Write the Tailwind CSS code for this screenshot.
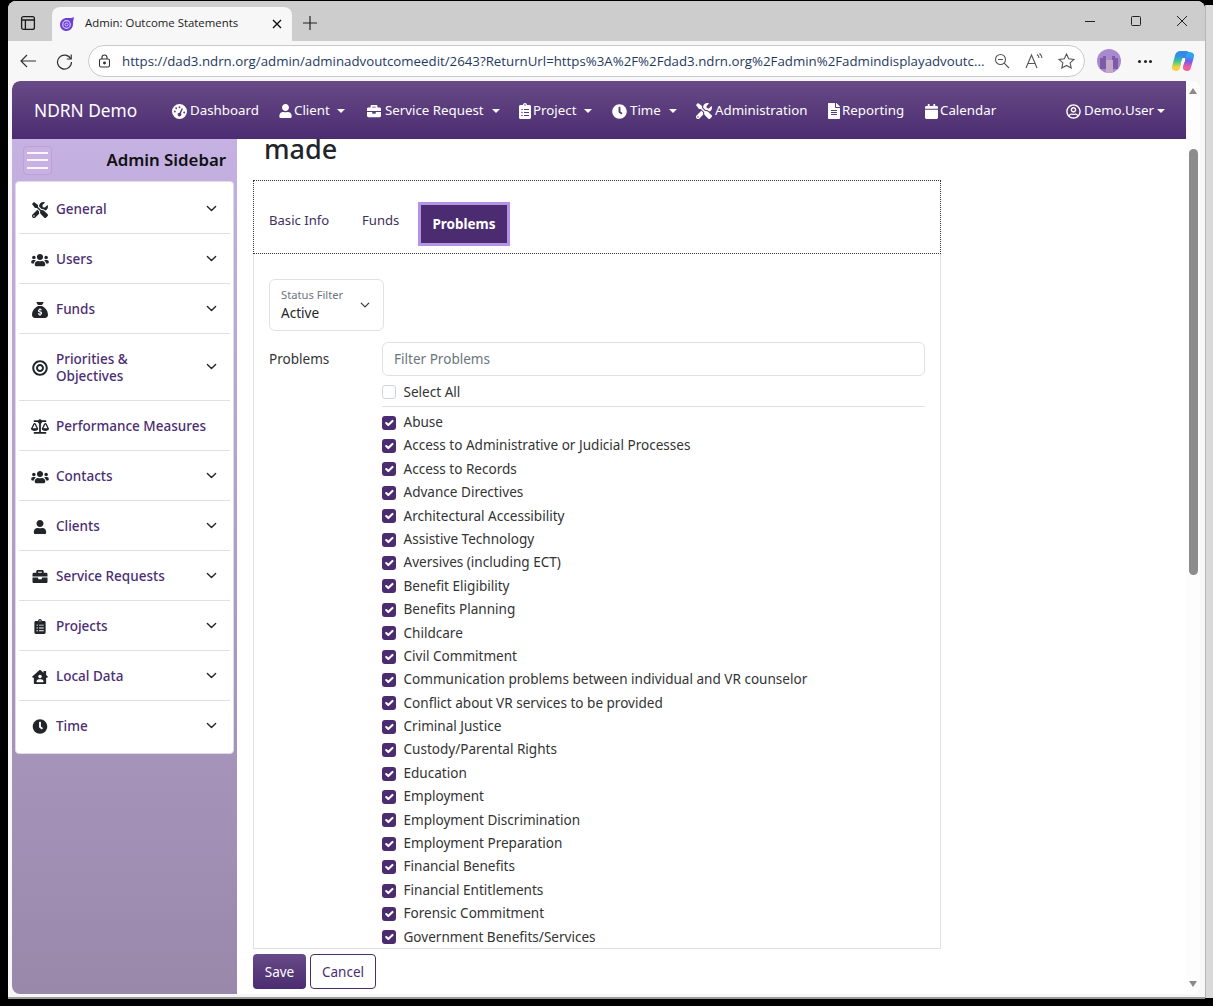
<!DOCTYPE html>
<html lang="en">
<head>
<meta charset="utf-8">
<title>Admin: Outcome Statements</title>
<script src="https://cdn.jsdelivr.net/npm/@tailwindcss/browser@4"></script>
</head>
<body class="m-0 bg-black overflow-hidden">
<svg class="hidden" xmlns="http://www.w3.org/2000/svg">
<symbol id="i-tools" viewBox="0 0 512 512"><path d="M501.1 395.7L384 278.6c-23.1-23.1-57.6-27.6-85.4-13.9L192 158.1V96L64 0 0 64l96 128h62.1l106.6 106.6c-13.6 27.8-9.2 62.3 13.9 85.4l117.1 117.1c14.6 14.6 38.2 14.6 52.7 0l52.7-52.7c14.5-14.6 14.5-38.2 0-52.7zM331.7 225c28.3 0 54.9 11 74.9 31l19.4 19.4c15.8-6.9 30.8-16.5 43.8-29.5 37.1-37.1 49.7-89.3 37.9-136.7-2.2-9-13.5-12.1-20.1-5.5l-74.4 74.4-67.9-11.3L334 98.9l74.4-74.4c6.6-6.6 3.4-17.9-5.7-20.2-47.4-11.7-99.6.9-136.6 37.9-28.5 28.5-41.9 66.1-41.2 103.6l82.1 82.1c8.1-1.9 16.5-2.9 24.7-2.9zm-103.9 82l-56.7-56.7L18.7 402.8c-25 25-25 65.5 0 90.5s65.5 25 90.5 0l123.6-123.6c-7.6-19.9-9.9-41.6-5-62.7zM64 472c-13.2 0-24-10.8-24-24 0-13.3 10.7-24 24-24s24 10.7 24 24c0 13.2-10.7 24-24 24z"/></symbol>
<symbol id="i-users" viewBox="0 0 640 512"><path d="M96 224c35.3 0 64-28.7 64-64s-28.7-64-64-64-64 28.7-64 64 28.7 64 64 64zm448 0c35.3 0 64-28.7 64-64s-28.7-64-64-64-64 28.7-64 64 28.7 64 64 64zm32 32h-64c-17.6 0-33.5 7.1-45.1 18.6 40.3 22.1 68.9 62 75.1 109.4h66c17.7 0 32-14.3 32-32v-32c0-35.3-28.7-64-64-64zm-256 0c61.9 0 112-50.1 112-112S381.9 32 320 32 208 82.1 208 144s50.1 112 112 112zm76.8 32h-8.3c-20.8 10-43.9 16-68.5 16s-47.6-6-68.5-16h-8.3C179.6 288 128 339.6 128 403.2V432c0 26.5 21.5 48 48 48h288c26.5 0 48-21.5 48-48v-28.8c0-63.6-51.6-115.2-115.2-115.2zm-223.7-13.4C161.5 263.1 145.6 256 128 256H64c-35.3 0-64 28.7-64 64v32c0 17.7 14.3 32 32 32h65.9c6.3-47.4 34.9-87.3 75.2-109.4z"/></symbol>
<symbol id="i-sack" viewBox="0 0 512 512"><path d="M320 96H192L144.6 24.9C137.5 14.2 145.1 0 157.9 0H354.1c12.8 0 20.4 14.2 13.3 24.9L320 96zM192 128H320c3.8 2.5 8.1 5.3 13 8.4C389.7 172.7 512 250.9 512 416c0 53-43 96-96 96H96c-53 0-96-43-96-96C0 250.9 122.3 172.7 179 136.4c4.8-3.1 9.2-5.9 13-8.4zm84 88c0-11-9-20-20-20s-20 9-20 20v14c-7.6 1.7-15.2 4.4-22.2 8.5c-13.9 8.3-25.9 22.8-25.8 43.9c.1 20.3 12 33.1 24.7 40.7c11 6.6 24.7 10.8 35.6 14l1.7 .5c12.6 3.8 21.8 6.8 28 10.7c5.1 3.2 5.8 5.4 5.9 8.2c.1 5-1.8 8-5.9 10.5c-5 3.1-12.9 5-21.4 4.7c-11.1-.4-21.5-3.9-35.1-8.5c-2.3-.8-4.7-1.6-7.2-2.4c-10.5-3.5-21.8 2.2-25.3 12.6s2.2 21.8 12.6 25.3c1.9 .6 4 1.3 6.1 2.1c8.3 2.9 17.9 6.2 28.2 8.4V424c0 11 9 20 20 20s20-9 20-20V410.2c8-1.7 16-4.5 23.2-9c14.3-8.9 25.1-24.1 24.8-45c-.3-20.3-11.7-33.4-24.6-41.6c-11.5-7.2-25.9-11.6-37.1-15l-.7-.2c-12.8-3.9-21.9-6.7-28.3-10.5c-5.2-3.1-5.3-4.9-5.3-6.7c0-3.7 1.4-6.5 6.2-9.3c5.4-3.2 13.6-5.1 21.5-5c9.6 .1 20.2 2.2 31.2 5.2c10.7 2.8 21.6-3.5 24.5-14.2s-3.5-21.6-14.2-24.5c-6.5-1.7-13.7-3.4-21.1-4.7V216z"/></symbol>
<symbol id="i-bullseye" viewBox="0 0 496 512"><path d="M248 8C111.03 8 0 119.03 0 256s111.03 248 248 248 248-111.03 248-248S384.97 8 248 8zm0 432c-101.69 0-184-82.29-184-184 0-101.69 82.29-184 184-184 101.69 0 184 82.29 184 184 0 101.69-82.29 184-184 184zm0-312c-70.69 0-128 57.31-128 128s57.31 128 128 128 128-57.31 128-128-57.31-128-128-128zm0 192c-35.29 0-64-28.71-64-64s28.71-64 64-64 64 28.71 64 64-28.71 64-64 64z"/></symbol>
<symbol id="i-scale" viewBox="0 0 640 512"><path d="M256 336h-.02c0-16.18 1.34-8.73-85.05-181.51-17.65-35.29-68.19-35.36-85.87 0C-2.06 328.75.02 320.33.02 336H0c0 44.18 57.31 80 128 80s128-35.82 128-80zM128 176l72 144H56l72-144zm511.98 160c0-16.18 1.34-8.73-85.05-181.51-17.65-35.29-68.19-35.36-85.87 0-87.12 174.26-85.04 165.84-85.04 181.51H384c0 44.18 57.31 80 128 80s128-35.82 128-80h-.02zM440 320l72-144 72 144H440zm88 128H352V153.25c23.51-10.29 41.16-31.48 46.39-57.25H528c8.84 0 16-7.16 16-16V48c0-8.84-7.16-16-16-16H383.64C369.04 12.68 346.09 0 320 0s-49.04 12.68-63.64 32H112c-8.84 0-16 7.16-16 16v32c0 8.84 7.16 16 16 16h129.61c5.23 25.76 22.87 46.96 46.39 57.25V448H112c-8.84 0-16 7.16-16 16v32c0 8.84 7.16 16 16 16h416c8.84 0 16-7.16 16-16v-32c0-8.84-7.16-16-16-16z"/></symbol>
<symbol id="i-user" viewBox="0 0 448 512"><path d="M224 256c70.7 0 128-57.3 128-128S294.7 0 224 0 96 57.3 96 128s57.3 128 128 128zm89.6 32h-16.7c-22.2 10.2-46.9 16-72.9 16s-50.6-5.8-72.9-16h-16.7C60.2 288 0 348.2 0 422.4V464c0 26.5 21.5 48 48 48h352c26.5 0 48-21.5 48-48v-41.6c0-74.2-60.2-134.4-134.4-134.4z"/></symbol>
<symbol id="i-brief" viewBox="0 0 512 512"><path d="M320 336c0 8.84-7.16 16-16 16h-96c-8.84 0-16-7.16-16-16v-48H0v144c0 25.6 22.4 48 48 48h416c25.6 0 48-22.4 48-48V288H320v48zm144-208h-80V80c0-25.6-22.4-48-48-48H176c-25.6 0-48 22.4-48 48v48H48c-25.6 0-48 22.4-48 48v80h512v-80c0-25.6-22.4-48-48-48zm-144 0H192V96h128v32z"/></symbol>
<symbol id="i-clip" viewBox="0 0 384 512"><path d="M336 64h-80c0-35.3-28.7-64-64-64s-64 28.7-64 64H48C21.5 64 0 85.5 0 112v352c0 26.5 21.5 48 48 48h288c26.5 0 48-21.5 48-48V112c0-26.5-21.5-48-48-48zM96 424c-13.3 0-24-10.7-24-24s10.7-24 24-24 24 10.7 24 24-10.7 24-24 24zm0-96c-13.3 0-24-10.7-24-24s10.7-24 24-24 24 10.7 24 24-10.7 24-24 24zm0-96c-13.3 0-24-10.7-24-24s10.7-24 24-24 24 10.7 24 24-10.7 24-24 24zm96-192c13.3 0 24 10.7 24 24s-10.7 24-24 24-24-10.7-24-24 10.7-24 24-24zm128 368c0 4.4-3.6 8-8 8H168c-4.4 0-8-3.6-8-8v-16c0-4.4 3.6-8 8-8h144c4.4 0 8 3.6 8 8v16zm0-96c0 4.4-3.6 8-8 8H168c-4.4 0-8-3.6-8-8v-16c0-4.4 3.6-8 8-8h144c4.4 0 8 3.6 8 8v16zm0-96c0 4.4-3.6 8-8 8H168c-4.4 0-8-3.6-8-8v-16c0-4.4 3.6-8 8-8h144c4.4 0 8 3.6 8 8v16z"/></symbol>
<symbol id="i-house" viewBox="0 0 576 512"><path d="M570.69,236.27,512,184.44V48a16,16,0,0,0-16-16H432a16,16,0,0,0-16,16V99.67L314.78,10.3C308.5,4.61,296.53,0,288,0s-20.46,4.61-26.74,10.3l-256,226A18.27,18.27,0,0,0,0,248.2a18.64,18.64,0,0,0,4.09,10.71L25.5,282.7a21.14,21.14,0,0,0,12,5.3,21.67,21.67,0,0,0,10.69-4.11l15.9-14V480a32,32,0,0,0,32,32H480a32,32,0,0,0,32-32V269.88l15.91,14A21.94,21.94,0,0,0,538.63,288a20.89,20.89,0,0,0,11.87-5.31l21.41-23.81A21.64,21.64,0,0,0,576,248.19,21,21,0,0,0,570.69,236.27ZM288,176a64,64,0,1,1-64,64A64,64,0,0,1,288,176ZM400,448H176a16,16,0,0,1-16-16,96,96,0,0,1,96-96h64a96,96,0,0,1,96,96A16,16,0,0,1,400,448Z"/></symbol>
<symbol id="i-clock" viewBox="0 0 512 512"><path d="M256,8C119,8,8,119,8,256S119,504,256,504,504,393,504,256,393,8,256,8Zm92.49,313h0l-20,25a16,16,0,0,1-22.49,2.5h0l-67-49.72a40,40,0,0,1-15-31.23V112a16,16,0,0,1,16-16h32a16,16,0,0,1,16,16V256l58,42.5A16,16,0,0,1,348.49,321Z"/></symbol>
<symbol id="i-gauge" viewBox="0 0 512 512"><path d="M0 256a256 256 0 1 1 512 0A256 256 0 1 1 0 256zm320 96c0-15-5-28-14-39l59-137c5-12-1-26-13-31s-26 1-31 13l-59 137c-2 0-4 0-6 0c-35 0-64 29-64 64s29 64 64 64s64-29 64-64zM256 144a32 32 0 1 0 0-64 32 32 0 1 0 0 64zM144 176a32 32 0 1 0 0-64 32 32 0 1 0 0 64zm-16 80a32 32 0 1 0-64 0 32 32 0 1 0 64 0zm320 32a32 32 0 1 0-64 0 32 32 0 1 0 64 0z"/></symbol>
<symbol id="i-file" viewBox="0 0 384 512"><path d="M224 136V0H24C10.7 0 0 10.7 0 24v464c0 13.3 10.7 24 24 24h336c13.3 0 24-10.7 24-24V160H248c-13.2 0-24-10.8-24-24zm64 236c0 6.6-5.4 12-12 12H108c-6.6 0-12-5.4-12-12v-8c0-6.6 5.4-12 12-12h168c6.6 0 12 5.4 12 12v8zm0-64c0 6.6-5.4 12-12 12H108c-6.6 0-12-5.4-12-12v-8c0-6.6 5.4-12 12-12h168c6.6 0 12 5.4 12 12v8zm0-72v8c0 6.6-5.4 12-12 12H108c-6.6 0-12-5.4-12-12v-8c0-6.6 5.4-12 12-12h168c6.6 0 12 5.4 12 12zm96-114.1v6.1H256V0h6.1c6.4 0 12.5 2.5 17 7l97.9 98c4.5 4.5 7 10.6 7 16.9z"/></symbol>
<symbol id="i-cal" viewBox="0 0 448 512"><path d="M12 192h424c6.6 0 12 5.4 12 12v260c0 26.5-21.5 48-48 48H48c-26.5 0-48-21.5-48-48V204c0-6.6 5.4-12 12-12zm436-44v-36c0-26.5-21.5-48-48-48h-48V12c0-6.6-5.4-12-12-12h-40c-6.6 0-12 5.4-12 12v52H160V12c0-6.6-5.4-12-12-12h-40c-6.6 0-12 5.4-12 12v52H48C21.5 64 0 85.5 0 112v36c0 6.6 5.4 12 12 12h424c6.6 0 12-5.4 12-12z"/></symbol>
<symbol id="i-ucircle" viewBox="0 0 496 512"><path d="M248 104c-53 0-96 43-96 96s43 96 96 96 96-43 96-96-43-96-96-96zm0 144c-26.5 0-48-21.5-48-48s21.5-48 48-48 48 21.5 48 48-21.5 48-48 48zm0-240C111 8 0 119 0 256s111 248 248 248 248-111 248-248S385 8 248 8zm0 448c-49.7 0-95.1-18.3-130.1-48.4 14.9-23 40.4-38.6 69.6-39.5 20.8 6.4 40.6 9.6 60.5 9.6s39.7-3.1 60.5-9.6c29.2 1 54.7 16.5 69.6 39.5-35 30.1-80.4 48.4-130.1 48.4zm162.7-84.1c-24.4-31.4-62.1-51.9-105.1-51.9-10.2 0-26 9.6-57.6 9.6-31.5 0-47.4-9.6-57.6-9.6-42.9 0-80.6 20.5-105.1 51.9C61.9 339.2 48 299.2 48 256c0-110.3 89.7-200 200-200s200 89.7 200 200c0 43.2-13.9 83.2-37.3 115.9z"/></symbol>
<symbol id="i-chev" viewBox="0 0 16 16"><path fill="none" stroke="currentColor" stroke-width="2" stroke-linecap="round" stroke-linejoin="round" d="M2 5l6 6 6-6"/></symbol>
<symbol id="i-check" viewBox="0 0 20 20"><path fill="none" stroke="#fff" stroke-width="3" stroke-linecap="round" stroke-linejoin="round" d="M6 10l3 3 6-6"/></symbol>
</svg>

<div class="w-[1213px] h-[1006px] flex items-start bg-black font-['Noto_Sans',sans-serif] overflow-hidden">
  <!-- window -->
  <div class="ml-[8px] mt-px w-[1197px] h-[998px] flex flex-col rounded-t-lg overflow-hidden bg-[#f7f7f7] border-b-2 border-b-[#9a9a9a] shrink-0">
    <!-- tab strip -->
    <div class="h-[40px] bg-[#cdcdcd] flex items-end shrink-0 relative">
      <div class="w-[44px] h-[40px] flex items-center justify-center shrink-0 pr-[4px] pt-[4px]">
        <svg width="16" height="16" viewBox="0 0 16 16" fill="none" stroke="#1a1a1a" stroke-width="1.3"><rect x="1.6" y="1.6" width="12.8" height="12.8" rx="2"/><path d="M1.6 5h12.8M5.4 5v9.4" /></svg>
      </div>
      <div class="w-[240px] h-[34px] bg-[#f7f7f7] rounded-t-lg flex items-center pl-[7px] shrink-0">
        <svg width="16" height="16" viewBox="0 0 16 16" class="shrink-0"><path d="M1 8.5C1 4.5 4.5 2 8 2c2.500 0 4.500.5 7-1-.5 3-1 4-1 7 0 4-3 7-6.500 7S1 12.500 1 8.500z" fill="#6b3fd4"/><circle cx="7.500" cy="8.500" r="3.800" fill="none" stroke="#d9c8ff" stroke-width="1.200"/><circle cx="7.500" cy="8.500" r="1.500" fill="none" stroke="#d9c8ff" stroke-width="1"/></svg>
        <span class="ml-[10px] mb-[2px] text-[11.400px] text-[#1a1a1a] whitespace-nowrap flex-1 font-['Open_Sans',sans-serif]">Admin: Outcome Statements</span>
        <svg width="10" height="10" viewBox="0 0 10 10" stroke="#111" stroke-width="1.400" class="mr-[10px] shrink-0"><path d="M1 1l8 8M9 1l-8 8"/></svg>
      </div>
      <div class="w-[36px] h-[40px] flex items-center justify-center shrink-0 pt-[4px]">
        <svg width="14" height="14" viewBox="0 0 14 14" stroke="#222" stroke-width="1.200"><path d="M7 0v14M0 7h14"/></svg>
      </div>
      <div class="flex-1"></div>
      <div class="h-[40px] flex items-center shrink-0">
        <div class="w-[46px] flex justify-center"><svg width="10" height="10" viewBox="0 0 10 10" stroke="#222"><path d="M0 5.500h10"/></svg></div>
        <div class="w-[46px] flex justify-center"><svg width="10" height="10" viewBox="0 0 10 10" fill="none" stroke="#222"><rect x=".5" y=".5" width="9" height="9" rx="1"/></svg></div>
        <div class="w-[46px] flex justify-center"><svg width="10" height="10" viewBox="0 0 10 10" stroke="#222"><path d="M0 0l10 10M10 0L0 10"/></svg></div>
      </div>
    </div>
    <!-- toolbar -->
    <div class="h-[40px] bg-[#f7f7f7] flex items-center shrink-0">
      <div class="w-[40px] flex justify-center"><svg width="16" height="14" viewBox="0 0 16 14" fill="none" stroke="#333" stroke-width="1.200"><path d="M16 7H1M7 1L1 7l6 6"/></svg></div>
      <div class="w-[32px] flex justify-center"><svg width="17" height="17" viewBox="0 0 17 17" fill="none" stroke="#333" stroke-width="1.200"><path d="M14.800 6A7 7 0 1 0 15.500 9"/><path d="M15.200 1.500V6h-4.500"/></svg></div>
      <div class="ml-[8px] w-[997px] h-[32px] rounded-full bg-white border border-[#c9c9c9] flex items-center pl-[9px] pr-[8px] shrink-0">
        <svg width="13" height="14" viewBox="0 0 13 14" fill="none" stroke="#333" stroke-width="1.100" class="shrink-0"><rect x="1.500" y="5" width="10" height="8" rx="1.500"/><path d="M4 5V3.500a2.500 2.500 0 0 1 5 0V5"/><circle cx="6.500" cy="9" r=".9" fill="#333"/></svg>
        <span class="ml-[11px] pt-px text-[13.270px] text-[#1f3a5f] whitespace-nowrap shrink-0 font-['Open_Sans',sans-serif]">https://dad3.ndrn.org/admin/adminadvoutcomeedit/2643?ReturnUrl=https%3A%2F%2Fdad3.ndrn.org%2Fadmin%2Fadmindisplayadvoutc...</span>
        <div class="flex items-center ml-auto gap-[15px] mr-[1px]">
          <svg width="16" height="16" viewBox="0 0 16 16" fill="none" stroke="#555" stroke-width="1.100"><circle cx="6.500" cy="6.500" r="5"/><path d="M10.200 10.200L15 15M4 6.500h5"/></svg>
          <svg width="18" height="16" viewBox="0 0 18 16" fill="none" stroke="#555" stroke-width="1.100"><path d="M1 15L6.500 2 12 15M3 10.500h7M12 1.500c1.500 1 2 2 2 3.500M14.500 .5c1.500 1.300 2.500 3 2.500 4.500"/></svg>
          <svg width="17" height="16" viewBox="0 0 17 16" fill="none" stroke="#555" stroke-width="1.100"><path d="M8.500 1l2.200 4.800 5.300.6-3.900 3.500 1.100 5.100-4.700-2.600L3.800 15l1.100-5.100L1 6.400l5.300-.6z"/></svg>
        </div>
      </div>
      <div class="ml-[12px] w-[24px] h-[24px] rounded-full bg-[#a98ad0] overflow-hidden flex items-end justify-center shrink-0">
        <svg width="24" height="24" viewBox="0 0 24 24"><path d="M3 20V9h3V7h3v4h6V7h3v2h3v11z" fill="#7d5ca6"/><rect x="9" y="11" width="7" height="13" fill="#c3a8c8"/></svg>
      </div>
      <div class="ml-[16px] w-[16px] flex justify-center gap-[2.500px] shrink-0"><span class="w-[3px] h-[3px] rounded-full bg-[#222]"></span><span class="w-[3px] h-[3px] rounded-full bg-[#222]"></span><span class="w-[3px] h-[3px] rounded-full bg-[#222]"></span></div>
      <div class="ml-[18px] shrink-0">
        <svg width="24" height="23" viewBox="0 0 24 23"><defs><linearGradient id="cpa" x1="0" y1="0" x2="0" y2="1"><stop offset="0" stop-color="#2f8fe8"/><stop offset=".5" stop-color="#3ec98c"/><stop offset="1" stop-color="#f4d03f"/></linearGradient><linearGradient id="cpb" x1="0" y1="0" x2="0" y2="1"><stop offset="0" stop-color="#2aa5f0"/><stop offset=".5" stop-color="#7a5ae8"/><stop offset="1" stop-color="#ee5f9a"/></linearGradient><linearGradient id="cpc" x1="0" y1="0" x2="1" y2="0"><stop offset="0" stop-color="#f06a8a"/><stop offset="1" stop-color="#f5733c"/></linearGradient></defs><path d="M9 4.500L15 4.500" stroke="#3a86e0" stroke-width="7" stroke-linecap="round"/><path d="M7 20L15 20" stroke="url(#cpc)" stroke-width="4.500" stroke-linecap="round"/><path d="M8 6L5 17" stroke="url(#cpa)" stroke-width="8" stroke-linecap="round" fill="none"/><path d="M19 6L16 17" stroke="url(#cpb)" stroke-width="8" stroke-linecap="round" fill="none"/><path d="M12.700 10L11.300 13" stroke="#fff" stroke-width="3" stroke-linecap="round"/></svg>
      </div>
    </div>
    <!-- page area -->
    <div class="flex-1 min-h-0 flex ml-[4px] mr-[5px] mb-[3px] bg-white rounded-lg overflow-hidden relative">
      <div class="flex-1 min-w-0 flex flex-col">
        <!-- navbar -->
        <nav class="h-[58px] shrink-0 bg-gradient-to-b from-[#674a86] to-[#4c2c71] flex items-center text-white text-[13.300px] rounded-tl-lg pl-[22px] pt-[2px]">
          <span class="text-[17.300px] w-[138px] shrink-0 whitespace-nowrap">NDRN Demo</span>
          <div class="flex items-center w-[107px] shrink-0"><svg class="w-[15px] h-[15px] fill-white mr-[3px] shrink-0"><use href="#i-gauge"/></svg><span>Dashboard</span></div>
          <div class="flex items-center w-[87px] shrink-0"><svg class="w-[13px] h-[14px] fill-white mr-[2px] shrink-0"><use href="#i-user"/></svg><span>Client</span><span class="ml-[7px] border-x-[4px] border-x-transparent border-t-[4px] border-t-white"></span></div>
          <div class="flex items-center w-[153px] shrink-0"><svg class="w-[16px] h-[14px] fill-white mr-[3px] shrink-0"><use href="#i-brief"/></svg><span>Service Request</span><span class="ml-[8px] border-x-[4px] border-x-transparent border-t-[4px] border-t-white"></span></div>
          <div class="flex items-center w-[93px] shrink-0"><svg class="w-[12px] h-[16px] fill-white mr-[2px] shrink-0"><use href="#i-clip"/></svg><span>Project</span><span class="ml-[8px] border-x-[4px] border-x-transparent border-t-[4px] border-t-white"></span></div>
          <div class="flex items-center w-[84px] shrink-0"><svg class="w-[15px] h-[15px] fill-white mr-[3px] shrink-0"><use href="#i-clock"/></svg><span>Time</span><span class="ml-[8px] border-x-[4px] border-x-transparent border-t-[4px] border-t-white"></span></div>
          <div class="flex items-center w-[132px] shrink-0"><svg class="w-[16px] h-[16px] fill-white mr-[3px] shrink-0"><use href="#i-tools"/></svg><span>Administration</span></div>
          <div class="flex items-center w-[97px] shrink-0"><svg class="w-[12px] h-[16px] fill-white mr-[2px] shrink-0"><use href="#i-file"/></svg><span>Reporting</span></div>
          <div class="flex items-center shrink-0"><svg class="w-[13px] h-[15px] fill-white mr-[2px] shrink-0"><use href="#i-cal"/></svg><span>Calendar</span></div>
          <div class="flex items-center shrink-0 ml-auto mr-[21px]"><svg class="w-[15px] h-[15px] fill-white mr-[3px] shrink-0"><use href="#i-ucircle"/></svg><span>Demo.User</span><span class="ml-[3px] border-x-[4px] border-x-transparent border-t-[4px] border-t-white"></span></div>
        </nav>
        <div class="flex-1 min-h-0 flex">
          <!-- sidebar -->
          <aside class="w-[225px] shrink-0 bg-gradient-to-b from-[#c5b1e2] to-[#9a88ab] flex flex-col">
            <div class="h-[42px] shrink-0 flex items-center justify-between pl-[11px] pr-[11px]">
              <div class="w-[29px] h-[29px] rounded-[4px] bg-[#c9b1e4] border border-[#b9a2d6] flex flex-col justify-center items-center gap-[5.500px]">
                <span class="w-[21px] h-[2px] bg-white/90"></span><span class="w-[21px] h-[2px] bg-white/90"></span><span class="w-[21px] h-[2px] bg-white/90"></span>
              </div>
              <span class="text-[16.800px] font-semibold text-[#111] whitespace-nowrap mb-[1px]">Admin Sidebar</span>
            </div>
            <div class="mx-[3px] w-[219px] h-[573px] bg-white border border-[#dcdce6] rounded-[4px] px-[3px] pt-[2px] text-[#4b2e72] text-[13.500px] font-medium">
              <div class="h-[50px] pt-[2px] flex items-center border-b border-[#dfdfe8] pl-[13px] pr-[13px]"><svg class="w-[16px] h-[16px] fill-[#212529] shrink-0"><use href="#i-tools"/></svg><span class="ml-[8px] flex-1">General</span><svg class="w-[11px] h-[11px] text-[#212529] shrink-0 mt-[-3px]"><use href="#i-chev"/></svg></div>
              <div class="h-[50px] pt-[2px] flex items-center border-b border-[#dfdfe8] pl-[13px] pr-[13px]"><svg class="w-[18px] h-[14px] fill-[#212529] shrink-0 ml-[-1px] mr-[-1px]"><use href="#i-users"/></svg><span class="ml-[8px] flex-1">Users</span><svg class="w-[11px] h-[11px] text-[#212529] shrink-0 mt-[-3px]"><use href="#i-chev"/></svg></div>
              <div class="h-[50px] pt-[2px] flex items-center border-b border-[#dfdfe8] pl-[13px] pr-[13px]"><svg class="w-[16px] h-[16px] fill-[#212529] shrink-0"><use href="#i-sack"/></svg><span class="ml-[8px] flex-1">Funds</span><svg class="w-[11px] h-[11px] text-[#212529] shrink-0 mt-[-3px]"><use href="#i-chev"/></svg></div>
              <div class="h-[67px] pt-[2px] flex items-center border-b border-[#dfdfe8] pl-[13px] pr-[13px]"><svg class="w-[16px] h-[16px] fill-[#212529] shrink-0"><use href="#i-bullseye"/></svg><span class="ml-[8px] flex-1 leading-[17px]">Priorities &amp;<br>Objectives</span><svg class="w-[11px] h-[11px] text-[#212529] shrink-0 mt-[-3px]"><use href="#i-chev"/></svg></div>
              <div class="h-[50px] pt-[2px] flex items-center border-b border-[#dfdfe8] pl-[13px] pr-[13px]"><svg class="w-[18px] h-[15px] fill-[#212529] shrink-0 ml-[-1px] mr-[-1px]"><use href="#i-scale"/></svg><span class="ml-[8px] flex-1 whitespace-nowrap">Performance Measures</span></div>
              <div class="h-[50px] pt-[2px] flex items-center border-b border-[#dfdfe8] pl-[13px] pr-[13px]"><svg class="w-[18px] h-[14px] fill-[#212529] shrink-0 ml-[-1px] mr-[-1px]"><use href="#i-users"/></svg><span class="ml-[8px] flex-1">Contacts</span><svg class="w-[11px] h-[11px] text-[#212529] shrink-0 mt-[-3px]"><use href="#i-chev"/></svg></div>
              <div class="h-[50px] pt-[2px] flex items-center border-b border-[#dfdfe8] pl-[13px] pr-[13px]"><svg class="w-[16px] h-[14px] fill-[#212529] shrink-0"><use href="#i-user"/></svg><span class="ml-[8px] flex-1">Clients</span><svg class="w-[11px] h-[11px] text-[#212529] shrink-0 mt-[-3px]"><use href="#i-chev"/></svg></div>
              <div class="h-[50px] pt-[2px] flex items-center border-b border-[#dfdfe8] pl-[13px] pr-[13px]"><svg class="w-[16px] h-[15px] fill-[#212529] shrink-0"><use href="#i-brief"/></svg><span class="ml-[8px] flex-1">Service Requests</span><svg class="w-[11px] h-[11px] text-[#212529] shrink-0 mt-[-3px]"><use href="#i-chev"/></svg></div>
              <div class="h-[50px] pt-[2px] flex items-center border-b border-[#dfdfe8] pl-[13px] pr-[13px]"><svg class="w-[16px] h-[15px] fill-[#212529] shrink-0"><use href="#i-clip"/></svg><span class="ml-[8px] flex-1">Projects</span><svg class="w-[11px] h-[11px] text-[#212529] shrink-0 mt-[-3px]"><use href="#i-chev"/></svg></div>
              <div class="h-[50px] pt-[2px] flex items-center border-b border-[#dfdfe8] pl-[13px] pr-[13px]"><svg class="w-[16px] h-[14px] fill-[#212529] shrink-0"><use href="#i-house"/></svg><span class="ml-[8px] flex-1">Local Data</span><svg class="w-[11px] h-[11px] text-[#212529] shrink-0 mt-[-3px]"><use href="#i-chev"/></svg></div>
              <div class="h-[50px] pt-px flex items-center pl-[13px] pr-[13px]"><svg class="w-[16px] h-[15px] fill-[#212529] shrink-0"><use href="#i-clock"/></svg><span class="ml-[8px] flex-1">Time</span><svg class="w-[11px] h-[11px] text-[#212529] shrink-0 mt-[-3px]"><use href="#i-chev"/></svg></div>
            </div>
          </aside>
          <!-- main -->
          <main class="flex-1 min-w-0 h-[855px] overflow-hidden pl-[16px] flex flex-col">
            <h1 class="h-[41px] shrink-0 mt-[-7px] pl-[11px] text-[27px] leading-[34px] font-medium text-[#212529] overflow-visible">made</h1>
            <div class="w-[688px] h-[74px] shrink-0 mt-[7px] border border-dotted border-[#333] flex items-start pl-[6px] pt-[21px] text-[13.100px] text-[#3f2f5f]">
              <span class="h-[36px] mt-px flex items-center px-[9px] w-[93px] whitespace-nowrap">Basic Info</span>
              <span class="h-[36px] mt-px flex items-center px-[9px] w-[65px] whitespace-nowrap">Funds</span>
              <span class="h-[44px] w-[92px] flex items-center justify-center bg-[#4b2c71] border-[3px] border-[#b592e6] text-white text-[13.500px] font-bold whitespace-nowrap">Problems</span>
            </div>
            <div class="w-[688px] h-[695px] shrink-0 border-x border-b border-[#dee2e6] overflow-hidden pl-[15px] pr-[15px] pt-[25px] text-[13.550px] text-[#333]">
              <div class="w-[115px] h-[52px] border border-[#dee2e6] rounded-[6px] flex items-center pl-[11px] pr-[13px]">
                <div class="flex-1 flex flex-col"><span class="text-[11.200px] leading-[14px] text-[#6c757d] whitespace-nowrap">Status Filter</span><span class="leading-[20px] text-[#212529] mt-[1px]">Active</span></div>
                <svg class="w-[10px] h-[10px] text-[#343a40] shrink-0"><use href="#i-chev"/></svg>
              </div>
              <div class="flex mt-[11px]">
                <div class="w-[113px] shrink-0 pt-[7px] leading-[20px] text-[#333]">Problems</div>
                <div class="flex-1 min-w-0">
                  <div class="h-[34px] border border-[#dee2e6] rounded-[6px] flex items-center pl-[11px] text-[#6c757d]">Filter Problems</div>
                  <div class="h-[31px] border-b border-[#dee2e6] flex items-center pt-[2px]"><span class="w-[14px] h-[14px] border border-[#ced4da] rounded-[3px] bg-white shrink-0"></span><span class="ml-[7.500px]">Select All</span></div>
                  <div class="pt-[4px] text-[#333] leading-[23.400px]">
                    <div class="h-[23.400px] flex items-center"><svg class="w-[14px] h-[14px] rounded-[3px] bg-[#4b2c71] shrink-0"><use href="#i-check"/></svg><span class="ml-[7.500px]">Abuse</span></div>
                    <div class="h-[23.400px] flex items-center"><svg class="w-[14px] h-[14px] rounded-[3px] bg-[#4b2c71] shrink-0"><use href="#i-check"/></svg><span class="ml-[7.500px]">Access to Administrative or Judicial Processes</span></div>
                    <div class="h-[23.400px] flex items-center"><svg class="w-[14px] h-[14px] rounded-[3px] bg-[#4b2c71] shrink-0"><use href="#i-check"/></svg><span class="ml-[7.500px]">Access to Records</span></div>
                    <div class="h-[23.400px] flex items-center"><svg class="w-[14px] h-[14px] rounded-[3px] bg-[#4b2c71] shrink-0"><use href="#i-check"/></svg><span class="ml-[7.500px]">Advance Directives</span></div>
                    <div class="h-[23.400px] flex items-center"><svg class="w-[14px] h-[14px] rounded-[3px] bg-[#4b2c71] shrink-0"><use href="#i-check"/></svg><span class="ml-[7.500px]">Architectural Accessibility</span></div>
                    <div class="h-[23.400px] flex items-center"><svg class="w-[14px] h-[14px] rounded-[3px] bg-[#4b2c71] shrink-0"><use href="#i-check"/></svg><span class="ml-[7.500px]">Assistive Technology</span></div>
                    <div class="h-[23.400px] flex items-center"><svg class="w-[14px] h-[14px] rounded-[3px] bg-[#4b2c71] shrink-0"><use href="#i-check"/></svg><span class="ml-[7.500px]">Aversives (including ECT)</span></div>
                    <div class="h-[23.400px] flex items-center"><svg class="w-[14px] h-[14px] rounded-[3px] bg-[#4b2c71] shrink-0"><use href="#i-check"/></svg><span class="ml-[7.500px]">Benefit Eligibility</span></div>
                    <div class="h-[23.400px] flex items-center"><svg class="w-[14px] h-[14px] rounded-[3px] bg-[#4b2c71] shrink-0"><use href="#i-check"/></svg><span class="ml-[7.500px]">Benefits Planning</span></div>
                    <div class="h-[23.400px] flex items-center"><svg class="w-[14px] h-[14px] rounded-[3px] bg-[#4b2c71] shrink-0"><use href="#i-check"/></svg><span class="ml-[7.500px]">Childcare</span></div>
                    <div class="h-[23.400px] flex items-center"><svg class="w-[14px] h-[14px] rounded-[3px] bg-[#4b2c71] shrink-0"><use href="#i-check"/></svg><span class="ml-[7.500px]">Civil Commitment</span></div>
                    <div class="h-[23.400px] flex items-center"><svg class="w-[14px] h-[14px] rounded-[3px] bg-[#4b2c71] shrink-0"><use href="#i-check"/></svg><span class="ml-[7.500px]">Communication problems between individual and VR counselor</span></div>
                    <div class="h-[23.400px] flex items-center"><svg class="w-[14px] h-[14px] rounded-[3px] bg-[#4b2c71] shrink-0"><use href="#i-check"/></svg><span class="ml-[7.500px]">Conflict about VR services to be provided</span></div>
                    <div class="h-[23.400px] flex items-center"><svg class="w-[14px] h-[14px] rounded-[3px] bg-[#4b2c71] shrink-0"><use href="#i-check"/></svg><span class="ml-[7.500px]">Criminal Justice</span></div>
                    <div class="h-[23.400px] flex items-center"><svg class="w-[14px] h-[14px] rounded-[3px] bg-[#4b2c71] shrink-0"><use href="#i-check"/></svg><span class="ml-[7.500px]">Custody/Parental Rights</span></div>
                    <div class="h-[23.400px] flex items-center"><svg class="w-[14px] h-[14px] rounded-[3px] bg-[#4b2c71] shrink-0"><use href="#i-check"/></svg><span class="ml-[7.500px]">Education</span></div>
                    <div class="h-[23.400px] flex items-center"><svg class="w-[14px] h-[14px] rounded-[3px] bg-[#4b2c71] shrink-0"><use href="#i-check"/></svg><span class="ml-[7.500px]">Employment</span></div>
                    <div class="h-[23.400px] flex items-center"><svg class="w-[14px] h-[14px] rounded-[3px] bg-[#4b2c71] shrink-0"><use href="#i-check"/></svg><span class="ml-[7.500px]">Employment Discrimination</span></div>
                    <div class="h-[23.400px] flex items-center"><svg class="w-[14px] h-[14px] rounded-[3px] bg-[#4b2c71] shrink-0"><use href="#i-check"/></svg><span class="ml-[7.500px]">Employment Preparation</span></div>
                    <div class="h-[23.400px] flex items-center"><svg class="w-[14px] h-[14px] rounded-[3px] bg-[#4b2c71] shrink-0"><use href="#i-check"/></svg><span class="ml-[7.500px]">Financial Benefits</span></div>
                    <div class="h-[23.400px] flex items-center"><svg class="w-[14px] h-[14px] rounded-[3px] bg-[#4b2c71] shrink-0"><use href="#i-check"/></svg><span class="ml-[7.500px]">Financial Entitlements</span></div>
                    <div class="h-[23.400px] flex items-center"><svg class="w-[14px] h-[14px] rounded-[3px] bg-[#4b2c71] shrink-0"><use href="#i-check"/></svg><span class="ml-[7.500px]">Forensic Commitment</span></div>
                    <div class="h-[23.400px] flex items-center"><svg class="w-[14px] h-[14px] rounded-[3px] bg-[#4b2c71] shrink-0"><use href="#i-check"/></svg><span class="ml-[7.500px]">Government Benefits/Services</span></div>
                  </div>
                </div>
              </div>
            </div>
            <div class="flex gap-[4px] mt-[5px] text-[13.500px]">
              <span class="w-[53px] h-[35px] pt-px rounded-[4px] bg-gradient-to-b from-[#674a86] to-[#4c2c71] text-white flex items-center justify-center">Save</span>
              <span class="w-[66px] h-[35px] pt-px rounded-[4px] border border-[#4b2c71] text-[#4b2c71] bg-white flex items-center justify-center">Cancel</span>
            </div>
          </main>
        </div>
      </div>
      <!-- scrollbar -->
      <div class="w-[14px] shrink-0 bg-[#fdfdfd] flex flex-col items-center pt-[7px]">
        <span class="border-x-[4.500px] border-x-transparent border-b-[6px] border-b-[#8a8a8a]"></span>
        <span class="w-[9px] h-[426px] mt-[55px] rounded-full bg-[#8c8c8c]"></span>
        <span class="mt-auto mb-[7px] border-x-[4.500px] border-x-transparent border-t-[6px] border-t-[#8a8a8a]"></span>
      </div>
    </div>
  </div>
  <div class="w-[8px] h-[993px] mt-[5px] bg-[#d9d9d9] shrink-0 border-l border-[#b5b5b5]"></div>
</div>
</body>
</html>
